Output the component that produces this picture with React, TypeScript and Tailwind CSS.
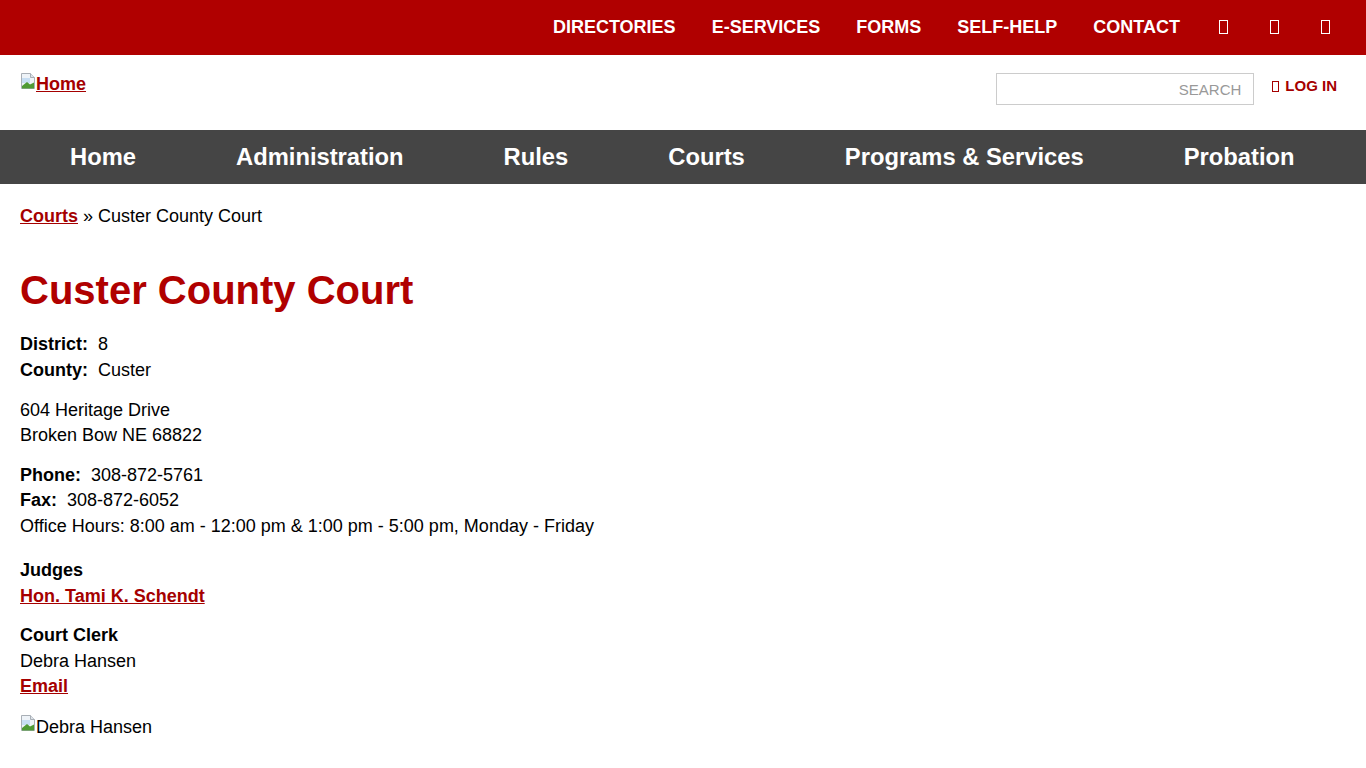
import React from 'react';

const topLinks = ['Directories', 'E-Services', 'Forms', 'Self-Help', 'Contact'];
const mainNav = ['Home', 'Administration', 'Rules', 'Courts', 'Programs & Services', 'Probation'];

// broken image placeholder like the browser draws
function BrokenImg() {
    return (
        <svg width="16" height="16" viewBox="0 0 16 16" className="shrink-0 w-[16px] h-[16px] self-start">
            <path d="M1.5 0.5h9l4 4v11h-13z" fill="#eef3f8" stroke="#a9afb6" />
            <path d="M10.5 0.5v4h4" fill="#dde3e9" stroke="#a9afb6" />
            <path d="M2 5h8v5H2z" fill="#c7def3" />
            <path d="M2 15.5v-2.5l5-4 3 2.5 4-2v6z" fill="#4f9a34" />
        </svg>
    );
}

function Tofu({ className }: { className: string }) {
    return <span className={`inline-block border ${className}`} />;
}

export default function App() {
    return (
        <div className="min-h-[768px] bg-white text-black" style={{ fontFamily: '"Liberation Sans", Arial, sans-serif' }}>
            {/* top utility bar */}
            <div className="h-[55px] bg-[#b00000] flex justify-end items-center pr-[15px] pb-[2px]">
                {topLinks.map((l) => (
                    <a key={l} href="#" className="px-[18px] text-white font-bold text-[18px] uppercase leading-none whitespace-nowrap">
                        {l}
                    </a>
                ))}
                {[0, 1, 2].map((i) => (
                    <span key={i} className="w-[51px] flex justify-center">
                        <Tofu className="w-[9px] h-[14px] border-white" />
                    </span>
                ))}
            </div>

            {/* header */}
            <div className="h-[75px] flex justify-between items-start pt-[18px] px-[20px]">
                <a href="#" className="text-[18px] font-bold text-[#a50000] underline leading-[22px] flex items-end">
                    <BrokenImg />
                    <span>Home</span>
                </a>
                <div className="flex items-center gap-[18px] pr-[9px]">
                    <div className="w-[258px] h-[32px] border border-[#cccccc] flex items-center justify-end pr-[12px] pt-[2px] text-[15px] text-[#999999]">
                        SEARCH
                    </div>
                    <a href="#" className="flex items-center gap-[6px] text-[15px] font-bold text-[#a50000] mt-[-6px]">
                        <Tofu className="w-[7px] h-[11px] border-[#a50000]" />
                        LOG IN
                    </a>
                </div>
            </div>

            {/* main nav */}
            <nav className="h-[54px] bg-[#454545] flex items-center px-[20px]">
                {mainNav.map((n) => (
                    <a key={n} href="#" className="shrink-0 whitespace-nowrap px-[50px] text-white font-bold text-[23.75px] leading-none">
                        {n}
                    </a>
                ))}
            </nav>

            {/* content */}
            <main className="px-[20px] pt-[20px] text-[18px] leading-[25.5px]">
                <div>
                    <a href="#" className="font-bold text-[#a50000] underline">Courts</a> » Custer County Court
                </div>

                <h1 className="mt-[38px] text-[40px] leading-[44px] font-bold text-[#b00000]">Custer County Court</h1>

                <div className="mt-[20px]">
                    <div><b>District:</b>&nbsp; 8</div>
                    <div className="mt-[1px]"><b>County:</b>&nbsp; Custer</div>
                </div>

                <div className="mt-[14px]">
                    <div>604 Heritage Drive</div>
                    <div>Broken Bow NE 68822</div>
                </div>

                <div className="mt-[14px]">
                    <div><b>Phone:</b>&nbsp; 308-872-5761</div>
                    <div><b>Fax:</b>&nbsp; 308-872-6052</div>
                    <div>Office Hours: 8:00 am - 12:00 pm &amp; 1:00 pm - 5:00 pm, Monday - Friday</div>
                </div>

                <div className="mt-[19px]">
                    <div className="font-bold">Judges</div>
                    <a href="#" className="font-bold text-[#a50000] underline">Hon. Tami K. Schendt</a>
                </div>

                <div className="mt-[14px]">
                    <div className="font-bold">Court Clerk</div>
                    <div>Debra Hansen</div>
                    <a href="#" className="font-bold text-[#a50000] underline">Email</a>
                </div>

                <div className="mt-[15px] flex items-end">
                    <BrokenImg />
                    <span>Debra Hansen</span>
                </div>
            </main>
        </div>
    );
}
